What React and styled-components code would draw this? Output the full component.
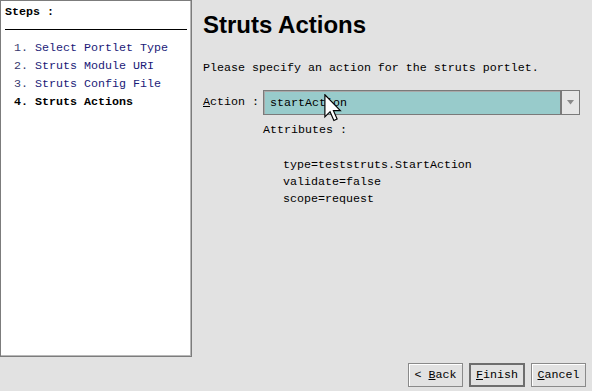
import React from "react";
import styled, { createGlobalStyle } from "styled-components";

const GlobalStyle = createGlobalStyle`
  html, body {
    margin: 0;
    padding: 0;
    background: #e2e2e2;
  }
`;

const mono = `"Liberation Mono", "DejaVu Sans Mono", monospace`;

const steps = [
  { num: "1.", label: "Select Portlet Type" },
  { num: "2.", label: "Struts Module URI" },
  { num: "3.", label: "Struts Config File" },
  { num: "4.", label: "Struts Actions", current: true },
];

const attributes = [
  "type=teststruts.StartAction",
  "validate=false",
  "scope=request",
];

const App = () => {
  return (
    <>
      <GlobalStyle />
      <Window>
        <StepsPanel>
          <StepsTitle>Steps :</StepsTitle>
          <StepsRule />
          <StepList>
            {steps.map((s) => (
              <StepItem key={s.num} current={s.current}>
                <StepNum current={s.current}>{s.num}</StepNum> {s.label}
              </StepItem>
            ))}
          </StepList>
        </StepsPanel>
        <Content>
          <Title>Struts Actions</Title>
          <Intro>Please specify an action for the struts portlet.</Intro>
          <ActionRow>
            <Label>
              <u>A</u>ction :
            </Label>
            <Combo>
              <ComboValue>startAction</ComboValue>
              <ComboButton>
                <svg width="9" height="5" viewBox="0 0 9 5">
                  <path d="M1 0 L8 0 L4.5 4.5 Z" fill="#8a8a8a" />
                </svg>
              </ComboButton>
              <Cursor width="18" height="28" viewBox="0 0 12 19">
                <path
                  d="M0.5 0.5 L0.5 15.5 L4 12 L6.6 18 L8.8 17 L6.3 11.3 L11 11.3 Z"
                  fill="#fff"
                  stroke="#000"
                  strokeWidth="0.8"
                  strokeLinejoin="miter"
                />
              </Cursor>
            </Combo>
          </ActionRow>
          <Attributes>
            <Text>Attributes :</Text>
            <Spacer />
            <AttrList>
              {attributes.map((a) => (
                <Text key={a}>{a}</Text>
              ))}
            </AttrList>
          </Attributes>
          <Buttons>
            <Button>
              &lt; <u>B</u>ack
            </Button>
            <Button primary>
              <u>F</u>inish
            </Button>
            <Button>
              <u>C</u>ancel
            </Button>
          </Buttons>
        </Content>
      </Window>
    </>
  );
};

export default App;

const Window = styled.div`
  width: 592px;
  height: 391px;
  display: flex;
  background: #e2e2e2;
  font-family: ${mono};
  font-size: 11.67px;
  color: #000;
  overflow: hidden;
`;

const StepsPanel = styled.div`
  width: 192px;
  height: 357px;
  box-sizing: border-box;
  background: #fff;
  border: 1px solid #7c7c7c;
  box-shadow: inset -1px -1px 0 #b8b8b8;
  padding: 3px 4px;
  display: flex;
  flex-direction: column;
`;

const StepsTitle = styled.div`
  font-weight: bold;
  line-height: 17px;
`;

const StepsRule = styled.div`
  height: 1px;
  background: #000;
  margin-top: 8px;
`;

const StepList = styled.div`
  margin-top: 9px;
  padding-left: 9px;
  display: flex;
  flex-direction: column;
`;

const StepItem = styled.div`
  line-height: 18px;
  white-space: pre;
  color: ${(p) => (p.current ? "#000" : "#1a1a78")};
  font-weight: ${(p) => (p.current ? "bold" : "normal")};
`;

const StepNum = styled.span`
  color: ${(p) => (p.current ? "#000" : "#3a3a70")};
`;

const Content = styled.div`
  flex: 1;
  display: flex;
  flex-direction: column;
  padding: 11px 6px 4px 11px;
`;

const Title = styled.h1`
  margin: 0;
  font-family: "Liberation Sans", Arial, sans-serif;
  font-size: 24px;
  font-weight: bold;
  line-height: 28px;
`;

const Text = styled.div`
  line-height: 17px;
  white-space: pre;
`;

const Intro = styled(Text)`
  margin-top: 21px;
`;

const ActionRow = styled.div`
  display: flex;
  align-items: center;
  margin-top: 13px;
`;

const Label = styled.div`
  width: 60px;
  line-height: 17px;
`;

const Combo = styled.div`
  position: relative;
  width: 317px;
  height: 25px;
  box-sizing: border-box;
  display: flex;
  border: 1px solid #7a7a7a;
  box-shadow: inset 1px 1px 0 #a8a8a8;
  background: #98cbcb;
`;

const ComboValue = styled.div`
  flex: 1;
  display: flex;
  align-items: center;
  padding-left: 6px;
`;

const ComboButton = styled.div`
  width: 17px;
  display: flex;
  align-items: center;
  justify-content: center;
  background: #e6e6e6;
  border-left: 2px solid #7a7a7a;
`;

const Cursor = styled.svg`
  position: absolute;
  left: 60px;
  top: 3px;
`;

const Attributes = styled.div`
  margin-top: 7px;
  margin-left: 60px;
  display: flex;
  flex-direction: column;
`;

const Spacer = styled.div`
  height: 18px;
`;

const AttrList = styled.div`
  margin-left: 20px;
  display: flex;
  flex-direction: column;
`;

const Buttons = styled.div`
  margin-top: auto;
  display: flex;
  justify-content: flex-end;
  gap: 6px;
`;

const Button = styled.button`
  width: ${(p) => (p.primary ? "56px" : "55px")};
  height: 24px;
  box-sizing: border-box;
  padding: 0;
  background: #e2e2e2;
  font-family: ${mono};
  font-size: 11.67px;
  color: #000;
  border: ${(p) => (p.primary ? "2px solid #6e6e6e" : "1px solid #8a8a8a")};
  box-shadow: ${(p) => (p.primary ? "none" : "inset 1px 1px 0 #fff")};
`;
